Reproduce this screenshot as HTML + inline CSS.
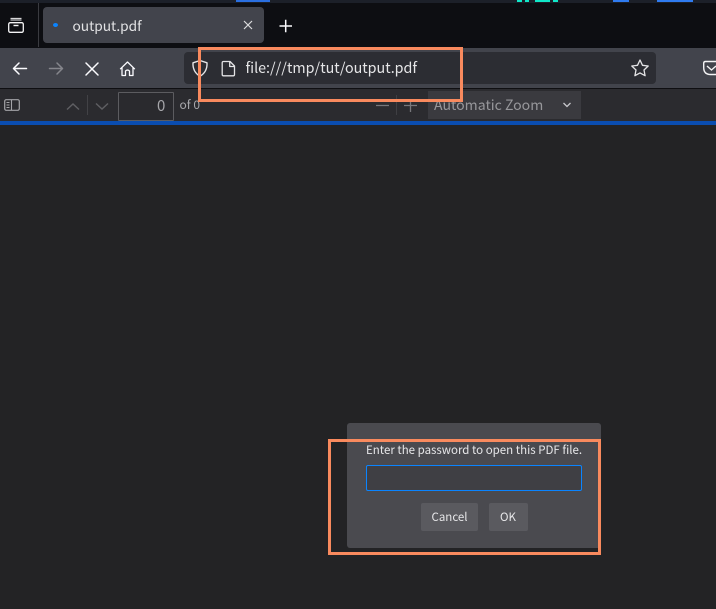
<!DOCTYPE html>
<html><head><meta charset="utf-8">
<style>
html,body{margin:0;padding:0;background:#232325}
body{width:716px;height:609px;position:relative;overflow:hidden;font-family:"Noto Sans CJK JP","Liberation Sans",sans-serif}
.a{position:absolute}
.t{position:absolute;white-space:nowrap;line-height:1}
svg{position:absolute;overflow:visible;fill:none}
</style></head>
<body>
<div class="a" style="left:0;top:0;width:716px;height:48px;background:#0d0e12"></div>
<div class="a" style="left:0;top:0;width:716px;height:3px;background:#1c2029"></div>
<div class="a" style="left:236px;top:0;width:34px;height:2px;background:#2a6fe0"></div>
<div class="a" style="left:517px;top:0;width:5px;height:2px;background:#10e8c8"></div>
<div class="a" style="left:525px;top:0;width:4px;height:2px;background:#10e8c8"></div>
<div class="a" style="left:535px;top:0;width:15px;height:2px;background:#10e8c8"></div>
<div class="a" style="left:553px;top:0;width:5px;height:2px;background:#10e8c8"></div>
<div class="a" style="left:613px;top:0;width:16px;height:2px;background:#2f7bf0"></div>
<div class="a" style="left:657px;top:0;width:36px;height:2px;background:#2f7bf0"></div>
<div class="a" style="left:38px;top:3px;width:1px;height:44px;background:#3a3b40"></div>
<svg style="left:0;top:0" width="40" height="48"><g stroke="#f4f4f5" stroke-width="1.3"><rect x="8.7" y="22.7" width="14.6" height="9.6" rx="1.5"/><path d="M10.5 20h11M10.500 18.400h11" stroke-width="1"/><path d="M13.500 25.500h5" stroke-width="1.400"/></g></svg>
<div class="a" style="left:43px;top:7px;width:221px;height:36px;background:#42444c;border-radius:4px"></div>
<div class="a" style="left:52.500px;top:23px;width:5px;height:4px;background:#0a84ff;border-radius:50%"></div>
<div class="t" style="left:72.500px;top:18.500px;font-size:13.700px;color:#e4e4e6">output.pdf</div>
<svg style="left:240px;top:17px" width="16" height="16"><path d="M4 4l8 8M12 4l-8 8" stroke="#dcdcde" stroke-width="1.200"/></svg>
<svg style="left:277px;top:17px" width="18" height="18"><path d="M2.500 9h12.500M8.700 2.800v12.400" stroke="#fbfbfe" stroke-width="1.500"/></svg>

<div class="a" style="left:0;top:48px;width:716px;height:40px;background:#42444c"></div>
<div class="a" style="left:0;top:88px;width:716px;height:1px;background:#0f0f12"></div>
<svg style="left:0;top:48px" width="150" height="40"><g stroke-width="1.500" stroke-linecap="round" stroke-linejoin="round"><path d="M13.500 20.500h13M19 15l-5.500 5.500 5.500 5.500" stroke="#fbfbfe"/><path d="M49.500 20.500h13M57 15l5.500 5.500-5.500 5.500" stroke="#85868c"/><path d="M86 15l12 12M98 15l-12 12" stroke="#fbfbfe"/><path d="M120.500 20.800l7-6.800 7 6.800M122 19.500v8h3.500v-4.500q2-1.800 4 0v4.500h3.500v-8" stroke="#fbfbfe" stroke-width="1.300"/></g></svg>
<div class="a" style="left:184px;top:52px;width:472px;height:32px;background:#2c2d33;border-radius:4px"></div>
<svg style="left:184px;top:52px" width="60" height="32"><path d="M16 8.500l7 2.300q.500 9-7 13.500q-7.500-4.500-7-13.500z" stroke="#e4e4e6" stroke-width="1.400" stroke-linejoin="round"/><path d="M39.500 9.500h6.500l4.500 4.500v8.500q0 1.300-1.300 1.300h-9.700q-1.300 0-1.300-1.300v-11.700q0-1.300 1.300-1.300zM45.700 9.700v4.800h4.800" stroke="#e4e4e6" stroke-width="1.300" stroke-linejoin="round"/></svg>
<div class="t" style="left:245.500px;top:60.500px;font-size:14.300px;color:#e6e6e8">file:///tmp/tut/output.pdf</div>
<svg style="left:630px;top:58px" width="20" height="20"><path d="M10 2l2.500 5.300 5.700.7-4.200 4 1.100 5.700-5.100-2.800-5.100 2.800 1.100-5.700-4.200-4 5.700-.7z" stroke="#e4e4e6" stroke-width="1.300" stroke-linejoin="round"/></svg>
<svg style="left:700px;top:58px" width="16" height="20"><path d="M16 3.500h-10.500q-1.800 0-1.800 1.800v4.200q0 7 7 7h5.300" stroke="#f4f4f5" stroke-width="1.400"/><path d="M7 8l4.500 4 4.500-4" stroke="#f4f4f5" stroke-width="1.400"/></svg>

<div class="a" style="left:0;top:89px;width:716px;height:32px;background:#2b2b2f"></div>
<div class="a" style="left:0;top:121px;width:716px;height:4px;background:#0a4db0"></div>
<svg style="left:0;top:89px" width="130" height="32"><rect x="4.700" y="10.700" width="14.600" height="10.600" rx="1.500" stroke="#a4a4a8" stroke-width="1.200"/><path d="M11.500 11v10M6.500 13.500h3M6.500 16h3M6.500 18.500h3" stroke="#a4a4a8" stroke-width="1.100"/><path d="M67 20.500l6-5.500 6 5.500M96 14.500l6 5.500 6-5.500" stroke="#5f5f63" stroke-width="1.400"/><path d="M87.500 6v20" stroke="#424246"/></svg>
<div class="a" style="left:118px;top:92px;width:54px;height:27px;border:1px solid #5c5c60;border-radius:1px;background:#2a2a2e"></div>
<div class="t" style="left:157px;top:98px;font-size:15px;color:#a6a6aa">0</div>
<div class="t" style="left:179.500px;top:99px;font-size:12px;color:#a8a8ac">of 0</div>
<svg style="left:370px;top:89px" width="50" height="32"><path d="M6 16.500h13M34 16.500h13M40.500 10v13" stroke="#77777b" stroke-width="1.300"/><path d="M26.500 6v20" stroke="#3f3f43"/></svg>
<div class="a" style="left:428px;top:91px;width:153px;height:28px;background:#3a3a3f"></div>
<div class="t" style="left:434px;top:98px;font-size:14.100px;color:#97979b">Automatic Zoom</div>
<svg style="left:560px;top:99px" width="14" height="12"><path d="M3.500 4l3.500 3.500 3.500-3.500" stroke="#c8c8cc" stroke-width="1.300"/></svg>

<div class="a" style="left:347px;top:423px;width:254px;height:125px;background:#4a4a4f;border-radius:3px"></div>
<div class="t" style="left:366px;top:444.500px;font-size:11.500px;color:#e6e6e8">Enter the password to open this PDF file.</div>
<div class="a" style="left:366px;top:465px;width:214px;height:24px;background:#3f3f44;border:1px solid #0a84ff;border-radius:2px"></div>
<div class="a" style="left:421px;top:503px;width:57px;height:28px;background:#5a5a5f;border-radius:2px"></div>
<div class="t" style="left:431.500px;top:511.500px;font-size:11.500px;color:#e6e6e8">Cancel</div>
<div class="a" style="left:489px;top:503px;width:39px;height:28px;background:#5a5a5f;border-radius:2px"></div>
<div class="t" style="left:500px;top:511.500px;font-size:11.500px;color:#e6e6e8">OK</div>

<div class="a" style="left:198px;top:47px;width:259px;height:49px;border:3px solid #f98a5e"></div>
<div class="a" style="left:327.500px;top:438.500px;width:267.500px;height:110px;border:3px solid #f98a5e"></div>
</body></html>
